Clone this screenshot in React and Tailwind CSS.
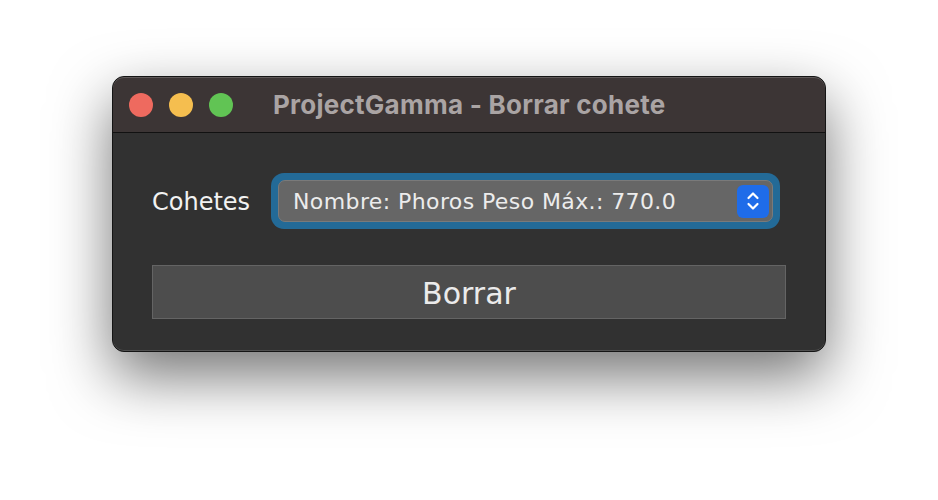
import React from 'react';

const Chevrons = () => (
  <svg width="16" height="22" viewBox="0 0 16 22" fill="none">
    <path d="M3.5 8 L8 3.5 L12.5 8" stroke="white" strokeWidth="2.2" strokeLinecap="round" strokeLinejoin="round" />
    <path d="M3.5 14 L8 18.5 L12.5 14" stroke="white" strokeWidth="2.2" strokeLinecap="round" strokeLinejoin="round" />
  </svg>
);

const App = () => {
  return (
    <div className="w-[938px] h-[500px] bg-white overflow-hidden">
      <div className="ml-[112px] mt-[76px] w-[714px] h-[276px] rounded-[12px] bg-[#313131] border border-[#141414] shadow-[0_24px_60px_rgba(0,0,0,0.55)] overflow-hidden flex flex-col">
        <div className="h-[56px] shrink-0 bg-[#3c3535] border-b border-[#111] flex items-center pl-[16px] rounded-t-[11px] shadow-[inset_0_1px_0_rgba(255,255,255,0.18)]">
          <div className="flex gap-[16px]">
            <span className="w-[24px] h-[24px] rounded-full bg-[#ee6a5f]" />
            <span className="w-[24px] h-[24px] rounded-full bg-[#f5be4f]" />
            <span className="w-[24px] h-[24px] rounded-full bg-[#61c454]" />
          </div>
          <div className="ml-[40px] text-[26px] font-bold text-[#aaa4a4] font-['Inter',sans-serif] tracking-[0.25px]">
            ProjectGamma - Borrar cohete
          </div>
        </div>
        <div className="flex-1 px-[39px] pt-[40px] font-['DejaVu_Sans',sans-serif] shadow-[inset_0_-1px_0_rgba(255,255,255,0.15)] rounded-b-[11px]">
          <div className="flex items-center h-[56px]">
            <span className="text-[24px] text-[#f2f2f2] w-[119px] pt-[2px]">Cohetes</span>
            <div className="w-[509px] h-[56px] rounded-[13px] bg-[#236a97] p-[7px]">
              <div className="h-full rounded-[7px] bg-[#666666] border border-[#7a7a7a] flex items-center pl-[14px] pr-[3px]">
                <span className="flex-1 text-[22px] text-[#ececec] tracking-[0.4px] pt-[1px]">Nombre: Phoros Peso Máx.: 770.0</span>
                <div className="w-[32px] h-[33px] rounded-[6px] bg-[#1f6ce9] flex items-center justify-center">
                  <Chevrons />
                </div>
              </div>
            </div>
          </div>
          <div className="mt-[36px] h-[54px] bg-[#4d4d4d] border border-[#646464] flex items-center justify-center text-[30px] text-[#ebebeb] pt-[2px]">
            Borrar
          </div>
        </div>
      </div>
    </div>
  );
};

export default App;
